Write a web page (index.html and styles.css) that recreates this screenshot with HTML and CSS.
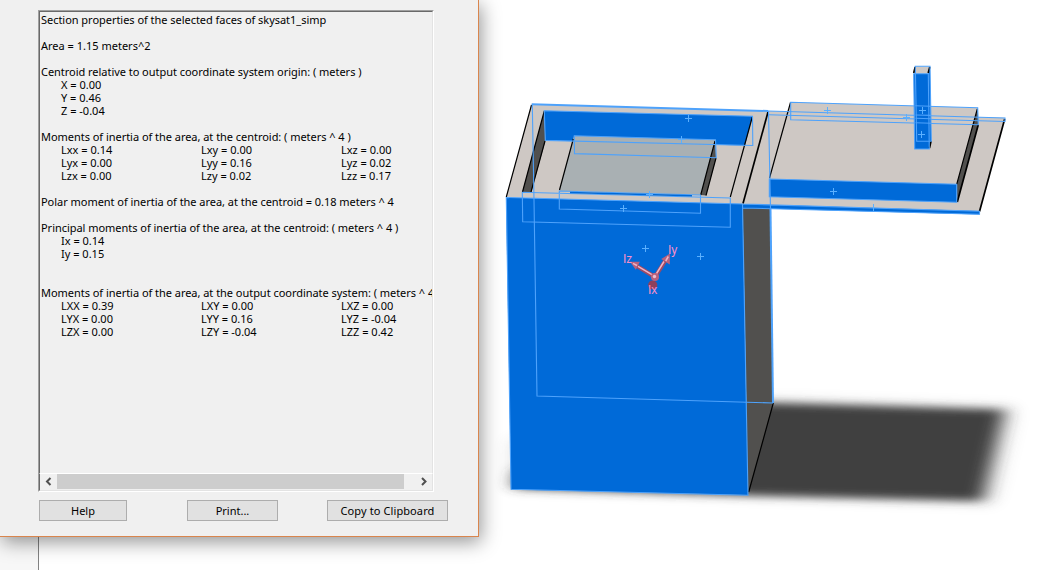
FILE: index.html
```html
<!DOCTYPE html>
<html lang="en">
<head>
<meta charset="utf-8">
<title>Section Properties</title>
<link rel="stylesheet" href="styles.css">
</head>
<body>
<main class="workspace">
  <div class="side-strip"></div>
  <svg class="viewport" viewBox="39 0 1008 570" width="1008" height="570">
    <defs>
      <filter id="soft" x="-20%" y="-40%" width="140%" height="180%"><feGaussianBlur stdDeviation="9 4.5"/></filter>
      <filter id="haze" x="-20%" y="-40%" width="140%" height="180%"><feGaussianBlur stdDeviation="9 7"/></filter>
      <path id="cross" d="M-3.5 0H3.5M0-3.5V3.5"/>
    </defs>
    <!-- ground shadow -->
    <polygon class="haze" points="510,440 780,400 1016,408 994,503 750,496 510,488"/>
    <polygon class="ground" points="518,470 740,402 1004,409.5 982,501 750,495.5 514,488"/>
    <!-- deck and top -->
    <polygon class="beige" points="531.7,104 1005,117.7 979.5,212 506,197.3"/>
    <!-- main body -->
    <polygon class="dark" points="742.5,204 770,208 773,403 748,495"/>
    <polygon class="blue" points="506,197.5 742.5,204 748,495 511,489.5"/>
    <polygon class="blue" points="742.5,204 979.5,211 979.5,214.5 742.5,208"/>
    <!-- recess -->
    <polygon class="dark" points="544.3,111 545.3,141 531,193 522.3,192.3"/>
    <polygon class="blue" points="544.3,110.7 752.5,116.3 745,145.4 545.3,140.4"/>
    <polygon class="gray" points="574,135.7 715.3,139.7 700.7,195 559.3,191"/>
    <polygon class="dark" points="715.3,140 716,158.3 706,195.5 700.7,195"/>
    <g class="edge">
      <path d="M531.5 105L506.3 197M544.3 111L522.5 192M545 141L531 192M573.3 139L559.5 190M715 141L700.7 195M716 158L706 195.5M752.3 117L730.3 197M773.3 403L748.7 492"/>
      <path class="heavy" d="M768 112L743 203.5"/>
    </g>
    <!-- raised panel -->
    <polygon class="beige" points="790.7,102.3 977.7,107.7 956.7,184.3 769.3,179"/>
    <polygon class="dark" points="977.7,108 978.3,125 957.3,202 956.7,184.3"/>
    <polygon class="blue" points="769.3,179 956.7,184.3 956.7,202.3 769.3,196.7"/>
    <g class="edge">
      <path d="M790.5 102.5L769.5 178M977.3 109L956.7 184.3"/>
      <path class="heavy" d="M978.2 125L957.3 202M1004.7 119L979.5 211.5"/>
    </g>
    <g class="wire">
      <path class="bold" d="M531.7 104.3L768.3 111"/>
      <path d="M768.3 111L1005 118V121.5L768.5 114.8"/>
      <path d="M532.3 105L534 200L537 396L773 403"/>
      <path class="bold" d="M770.5 209L773 403"/>
      <path d="M506.3 197.5L742.5 204L748 495.3L511 489.3ZM742.5 204L979.5 211.3V214.3L742.5 208M768.5 111L770.5 209"/>
      <path d="M544.3 110.7L752.5 116.3L752.8 145.5L545.3 140.4Z"/>
      <path d="M574.3 135.7L715.5 139.7L716.3 157.7L574.5 153.6Z"/>
      <path d="M559.3 191V209L700.5 213.2V195ZM522.3 192.3L522.7 221.7L730.3 227.3V198Z"/>
      <path d="M790.7 102.3L977.7 107.7L978.3 124.8L790.7 119.7ZM769.3 179L956.7 184.3V202.3L769.3 196.7Z"/>
    </g>
    <path class="lip" d="M570 192.5L692 195.7"/>
    <!-- post -->
    <polygon class="beige" points="915.3,66.3 930,66.7 928.3,74 913.7,73.7"/>
    <polygon class="blue" points="913.7,73.7 928.3,74 930,67 931.3,141.3 929.3,149 914.7,149"/>
    <path class="edge heavy" d="M915.2 67L913.7 73M929.8 67L928.2 73M931 141L929.5 148"/>
    <g class="wire">
      <path d="M915.3 66.3H930L931.3 141.3H916.7Z"/>
      <path d="M913.7 73.8H928.3L929.3 149H914.7Z"/>
      <path d="M915.3 105.8L931 106.3M915.5 115L931 115.4M915.5 118.2L931 118.7M915.5 122.7L931 123.3"/>
    </g>
    <g class="mark">
      <use href="#cross" x="688.5" y="118.5"/><use href="#cross" x="681.5" y="139.5"/>
      <use href="#cross" x="649.5" y="194.5"/><use href="#cross" x="623.5" y="208.5"/>
      <use href="#cross" x="827.5" y="110.5"/><use href="#cross" x="906.5" y="117.5"/>
      <use href="#cross" x="922.5" y="110.5"/><use href="#cross" x="921.5" y="134.5"/>
      <use href="#cross" x="833.5" y="191.5"/><path d="M873.5 204V211"/>
      <use href="#cross" x="645.5" y="248.5"/><use href="#cross" x="700.5" y="256.5"/>
    </g>
    <!-- principal axes -->
    <g class="triad">
      <path class="rod" d="M655 277L636 265.5M655 277L665 261"/>
      <path class="shine" d="M654 275.8L638 266.3M655 276L664 261.5"/>
      <polygon points="630,261.8 639.8,261.8 635.8,269.8"/>
      <polygon points="669.9,253.6 669.8,264.6 661.2,259"/>
      <path class="shine" d="M633 263.3L637 265.5M668.3 256.5L665.7 261"/>
      <circle class="ball-far" cx="652.7" cy="285" r="4.6"/>
      <circle cx="655" cy="277" r="4"/>
      <circle class="glint" cx="654.5" cy="276.5" r="1.7"/>
    </g>
    <g class="axis">
      <text x="623" y="263">Iz</text><text x="668" y="254">Iy</text><text x="648" y="294">Ix</text>
    </g>
  </svg>

  <section class="dialog">
    <div class="report">
      <div class="report-text">
        <p>Section properties of the selected faces of skysat1_simp</p>
        <p class="gap short">Area = 1.15 meters^2</p>
        <p class="gap">Centroid relative to output coordinate system origin: ( meters )</p>
        <div class="rows"><span>X = 0.00</span></div>
        <div class="rows"><span>Y = 0.46</span></div>
        <div class="rows"><span>Z = -0.04</span></div>
        <p class="gap">Moments of inertia of the area, at the centroid: ( meters ^ 4 )</p>
        <div class="rows"><span>Lxx = 0.14</span><span>Lxy = 0.00</span><span>Lxz = 0.00</span></div>
        <div class="rows"><span>Lyx = 0.00</span><span>Lyy = 0.16</span><span>Lyz = 0.02</span></div>
        <div class="rows"><span>Lzx = 0.00</span><span>Lzy = 0.02</span><span>Lzz = 0.17</span></div>
        <p class="gap">Polar moment of inertia of the area, at the centroid = 0.18 meters ^ 4</p>
        <p class="gap">Principal moments of inertia of the area, at the centroid: ( meters ^ 4 )</p>
        <div class="rows"><span>Ix = 0.14</span></div>
        <div class="rows"><span>Iy = 0.15</span></div>
        <p class="gap2">Moments of inertia of the area, at the output coordinate system: ( meters ^ 4 )</p>
        <div class="rows"><span>LXX = 0.39</span><span>LXY = 0.00</span><span>LXZ = 0.00</span></div>
        <div class="rows"><span>LYX = 0.00</span><span>LYY = 0.16</span><span>LYZ = -0.04</span></div>
        <div class="rows"><span>LZX = 0.00</span><span>LZY = -0.04</span><span>LZZ = 0.42</span></div>
      </div>
      <div class="scrollbar">
        <svg class="arrow" width="17" height="15" viewBox="0 0 17 15"><path d="M10.5 4L7 7.5L10.5 11"/></svg>
        <div class="thumb"></div>
        <svg class="arrow" width="28" height="15" viewBox="0 0 28 15"><path d="M18 4L21.5 7.5L18 11"/></svg>
      </div>
    </div>
    <div class="actions">
      <button class="btn help">Help</button>
      <button class="btn print">Print...</button>
      <button class="btn copy">Copy to Clipboard</button>
    </div>
  </section>
</main>
</body>
</html>
```
FILE: styles.css
```css
* { box-sizing: border-box; }
body { margin: 0; background: #fff; overflow: hidden; }
.workspace { position: relative; display: flex; width: 1047px; height: 570px; overflow: hidden; }
.side-strip { width: 39px; height: 570px; background: #f7f7f7; border-right: 1px solid #828282; }
.viewport { display: block; flex: none; background: #fff; }

/* model */
.blue { fill: #006ad8; }
.beige { fill: #cec8c4; }
.gray { fill: #a9b0b3; }
.dark { fill: #51504e; }
.ground { fill: #404040; filter: url(#soft); }
.haze { fill: #404040; opacity: .14; filter: url(#haze); }
.edge { fill: none; stroke: #000; stroke-width: 1.2; }
.heavy { stroke-width: 1.7; }
.wire { fill: none; stroke: #4ea2fb; stroke-width: 1.1; }
.bold { stroke-width: 2; }
.lip { stroke: #006ad8; stroke-width: 1.5; }
.mark { fill: none; stroke: #5bb0ff; stroke-width: 1; }
.triad { fill: #b9627e; stroke: none; }
.rod { stroke: #9c4a66; stroke-width: 4.2; }
.shine { stroke: #efb4c6; stroke-width: 1.5; }
.ball-far { fill: #8f405b; }
.glint { fill: #f0bccb; }
.axis { fill: #f78fc8; font: 12px "Liberation Sans", Arial, sans-serif; }

/* dialog */
.dialog {
  position: absolute; left: 0; top: 0; width: 479px; height: 537px;
  padding: 10px 0 0 38px;
  background: #f0f0f0;
  border-right: 1px solid #d9854d; border-bottom: 1px solid #d9854d;
  box-shadow: 2px 5px 18px rgba(0, 0, 0, .42);
  font: 11px/13px "Noto Sans", "Open Sans", sans-serif; color: #000;
}
.report {
  display: flex; flex-direction: column;
  width: 396px; height: 482px;
  border: 1px solid; border-color: #a0a0a0 #fff #fff #a0a0a0;
}
.report-text {
  flex: 1; overflow: hidden; padding: 1px 0 0 1px;
  border: 1px solid; border-color: #696969 #e3e3e3 #fff #696969; border-bottom: 0;
  white-space: nowrap;
}
.report-text p { margin: 0; height: 13px; letter-spacing: -.035px; }
.report-text .short { letter-spacing: 0; }
.report-text .gap { margin-top: 13px; }
.report-text .gap2 { margin-top: 26px; }
.rows { display: grid; grid-template-columns: 140px 140px 1fr; padding-left: 20px; height: 13px; }
.scrollbar {
  display: flex; height: 18px; padding-bottom: 1px; background: #f0f0f0;
  border: 1px solid; border-color: #fff #e3e3e3 #e3e3e3 #696969;
}
.thumb { flex: 1; background: #cdcdcd; }
.arrow { flex: none; fill: none; stroke: #505050; stroke-width: 2; }
.actions { display: flex; padding: 8px 0 0 1px; }
.btn {
  height: 21px; padding: 0; text-align: center;
  background: #e1e1e1; border: 1px solid #adadad;
  font: 11px/19px "Noto Sans", "Open Sans", sans-serif; color: #000;
}
.help { width: 88px; }
.print { width: 91px; margin-left: 60px; }
.copy { width: 121px; margin-left: 49px; letter-spacing: .1px; }
```
